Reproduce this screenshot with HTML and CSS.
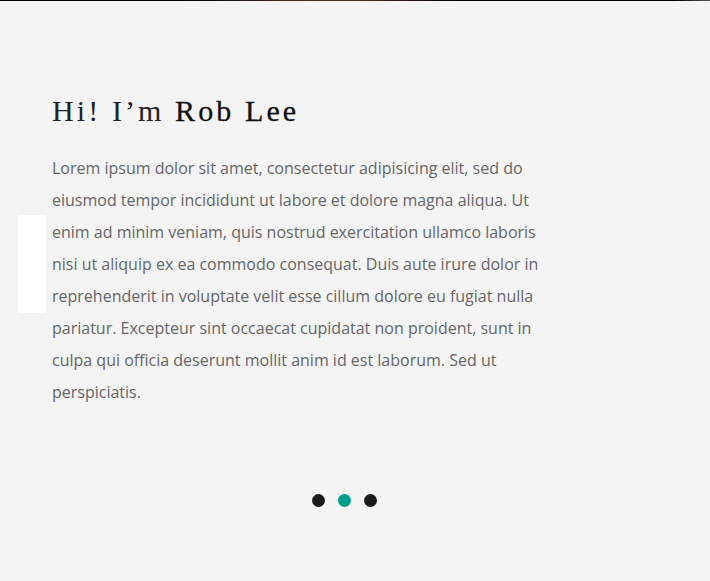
FILE: index.html
```html
<!DOCTYPE html>
<html>
<head>
<meta charset="utf-8">
<link rel="stylesheet" href="styles.css">
</head>
<body>
<div class="topline"></div>
<div class="page">
  <div class="marker"></div>
  <section class="intro">
    <h1 class="title">Hi! I’m <span class="name">Rob Lee</span></h1>
    <p class="text">Lorem ipsum dolor sit amet, consectetur adipisicing elit, sed do eiusmod tempor incididunt ut labore et dolore magna aliqua. Ut enim ad minim veniam, quis nostrud exercitation ullamco laboris nisi ut aliquip ex ea commodo consequat. Duis aute irure dolor in reprehenderit in voluptate velit esse cillum dolore eu fugiat nulla pariatur. Excepteur sint occaecat cupidatat non proident, sunt in culpa qui officia deserunt mollit anim id est laborum. Sed ut perspiciatis.</p>
  </section>
</div>
<div class="dots">
  <span class="dot"></span>
  <span class="dot active"></span>
  <span class="dot"></span>
</div>
</body>
</html>
```
FILE: styles.css
```css
html, body {
  margin: 0;
  padding: 0;
  background: #f4f4f4;
  height: 100%;
}
.topline {
  height: 1px;
  background: linear-gradient(90deg, #000 0%, #000 25%, #3a2a22 40%, #4a3028 50%, #000 65%, #000 95%, #555 100%);
}
.page {
  position: relative;
  padding: 88px 0 0 52px;
}
.marker {
  position: absolute;
  left: 18px;
  top: 214px;
  width: 28px;
  height: 98px;
  background: #ffffff;
}
.intro {
  width: 495px;
}
.title {
  margin: 0;
  font-family: "Liberation Serif", serif;
  font-weight: normal;
  font-size: 30px;
  line-height: 44px;
  letter-spacing: 3.1px;
  color: #222;
}
.name {
  color: #111;
  -webkit-text-stroke: 0.3px #111;
}
.text {
  margin: 19px 0 0 0;
  font-family: "Open Sans", sans-serif;
  font-size: 16px;
  line-height: 32px;
  color: #666;
}
.dots {
  display: flex;
  justify-content: center;
  gap: 13px;
  margin-top: 86px;
  padding-right: 22px;
}
.dot {
  width: 13px;
  height: 13px;
  border-radius: 50%;
  background: #1b1b1b;
}
.dot.active {
  background: #009e8c;
}
```
